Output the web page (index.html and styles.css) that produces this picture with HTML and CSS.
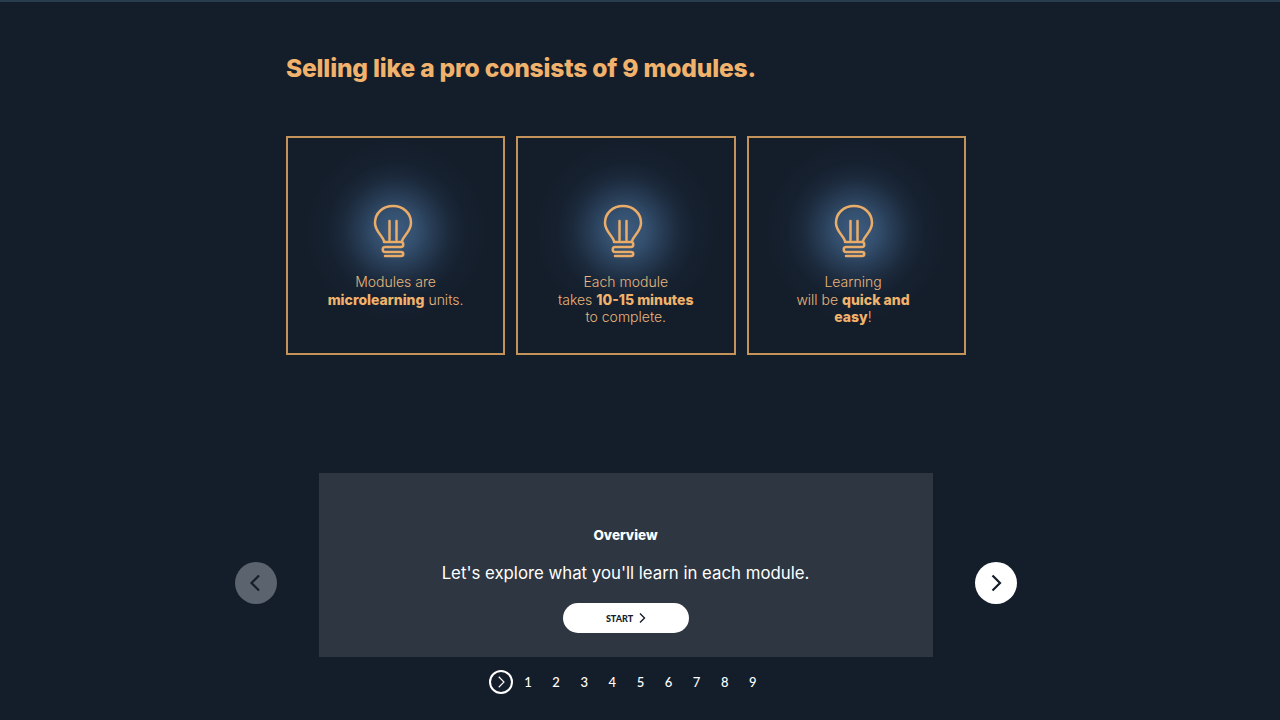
FILE: index.html
```html
<!DOCTYPE html>
<html lang="en">
<head>
  <meta charset="UTF-8">
  <meta name="viewport" content="width=device-width, initial-scale=1.0">
  <title>Selling like a pro</title>
  <link rel="stylesheet" href="styles.css">
</head>
<body>
  <div class="top-bar"></div>

  <div class="intro">
    <h1>Selling like a pro consists of 9 modules.</h1>
    <div class="cards">
      <div class="card">
        <div class="glow">
          <svg class="bulb" viewBox="0 0 40 54"><use href="#bulb"></use></svg>
        </div>
        <p>Modules are<br><b>microlearning</b> units.</p>
      </div>
      <div class="card">
        <div class="glow">
          <svg class="bulb" viewBox="0 0 40 54"><use href="#bulb"></use></svg>
        </div>
        <p>Each module<br>takes <b>10-15 minutes</b><br>to complete.</p>
      </div>
      <div class="card card-narrow">
        <div class="glow">
          <svg class="bulb" viewBox="0 0 40 54"><use href="#bulb"></use></svg>
        </div>
        <p>Learning<br>will be <b>quick and<br>easy</b>!</p>
      </div>
    </div>
  </div>

  <div class="carousel">
    <button class="arrow arrow-prev">
      <svg viewBox="0 0 24 24"><path d="M15 4.500 7.500 12l7.500 7.500"></path></svg>
    </button>
    <div class="slide-col">
      <div class="slide">
        <h2>Overview</h2>
        <p>Let's explore what you'll learn in each module.</p>
        <button class="start">START
          <svg viewBox="0 0 10 12"><path d="M3 1.500 7.500 6 3 10.500"></path></svg>
        </button>
      </div>
      <div class="pager">
        <span class="pager-current">
          <svg viewBox="0 0 24 24"><path d="M9 5l7 7-7 7"></path></svg>
        </span>
        <span>1</span><span>2</span><span>3</span><span>4</span><span>5</span><span>6</span><span>7</span><span>8</span><span>9</span>
      </div>
    </div>
    <button class="arrow arrow-next">
      <svg viewBox="0 0 24 24"><path d="M8.500 4.500 16 12l-7.500 7.500"></path></svg>
    </button>
  </div>

  <svg class="defs" width="0" height="0">
    <symbol id="bulb" viewBox="0 0 40 54">
      <path d="M11 37 C9 31 2 27 2 19 C2 9 10 2 20 2 C30 2 38 9 38 19 C38 27 31 31 29 37"></path>
      <path d="M16.500 17V36M23.500 17V36"></path>
      <path d="M11 38H28C31 38 31 43 28 43H12C9 43 9 48 12 48H28C31 48 31 52 28 52H12"></path>
    </symbol>
  </svg>
</body>
</html>
```

FILE: styles.css
```css
* {
  box-sizing: border-box;
}

html, body {
  height: 100%;
}

body {
  margin: 0;
  background-color: #141e2b;
  font-family: Inter, "Noto Sans", sans-serif;
  overflow: hidden;
}

.top-bar {
  height: 2px;
  background-color: #2a3d4e;
}

.defs {
  position: absolute;
}

.intro {
  width: 680px;
  margin-left: 286px;
}

h1 {
  margin: 0;
  padding-top: 50px;
  height: 134px;
  font-size: 24.600px;
  line-height: 32px;
  font-weight: 800;
  letter-spacing: -0.2px;
  color: #f0b26c;
}

.cards {
  display: grid;
  grid-template-columns: 219px 219.500px 219px;
  gap: 11px;
}

.card {
  height: 219px;
  border: 2px solid #c4935a;
  display: flex;
  flex-direction: column;
  align-items: center;
  padding-top: 3px;
  color: #e9b67b;
}

.glow {
  width: 180px;
  height: 180px;
  flex: none;
  margin-bottom: -48px;
  display: flex;
  align-items: center;
  justify-content: center;
  background: radial-gradient(circle closest-side, #3e5b80 0%, #34506f 22%, #263a52 42%, #1b293b 60%, #162130 76%, rgba(20, 30, 43, 0) 100%);
}

.bulb {
  width: 40px;
  height: 54px;
  margin-right: 5px;
  fill: none;
  stroke: #e9ad69;
  stroke-width: 2.500;
  stroke-linecap: round;
  stroke-linejoin: round;
}

.card p {
  position: relative;
  margin: 0;
  font-size: 14px;
  line-height: 17.500px;
  font-weight: 300;
  text-align: center;
}

.card-narrow p {
  margin-right: 6px;
}

.card b {
  font-weight: 800;
  color: #f0b26c;
}

.carousel {
  width: 782px;
  margin: 118px 0 0 235px;
  display: flex;
  justify-content: space-between;
  align-items: flex-start;
}

.arrow {
  width: 42px;
  height: 42px;
  margin-top: 89px;
  padding: 0;
  border: none;
  border-radius: 50%;
  background-color: #fff;
  display: flex;
  align-items: center;
  justify-content: center;
}

.arrow svg {
  width: 24px;
  height: 24px;
  fill: none;
  stroke: #141e2b;
  stroke-width: 2.200;
}

.arrow-prev {
  background-color: #5b636e;
}

.slide-col {
  width: 614px;
  margin-left: -1px;
}

.slide {
  height: 184px;
  background-color: #2e3641;
  padding-top: 52px;
  display: flex;
  flex-direction: column;
  align-items: center;
  color: #fff;
}

.slide h2 {
  margin: 0;
  font-size: 13.500px;
  line-height: 20px;
  font-weight: 800;
}

.slide p {
  margin: 16px 0 0;
  font-size: 16.800px;
  line-height: 24px;
}

.start {
  width: 126px;
  height: 30px;
  margin-top: 18px;
  padding: 0 0 0 2px;
  border: none;
  border-radius: 15px;
  background-color: #fff;
  color: #141e2b;
  font-family: Lato, sans-serif;
  font-size: 9px;
  font-weight: 900;
  display: flex;
  align-items: center;
  justify-content: center;
  gap: 4px;
}

.start svg {
  width: 10px;
  height: 12px;
  fill: none;
  stroke: #141e2b;
  stroke-width: 1.400;
}

.pager {
  display: flex;
  align-items: center;
  margin: 13px 0 0 170px;
  color: #fff;
  font-family: Lato, sans-serif;
  font-size: 13px;
  font-weight: 500;
}

.pager span {
  width: 28.100px;
  text-align: center;
}

.pager .pager-current {
  width: 24px;
  height: 24px;
  margin-right: 1.500px;
  border: 2px solid #fff;
  border-radius: 50%;
  display: flex;
  align-items: center;
  justify-content: center;
}

.pager-current svg {
  width: 18px;
  height: 18px;
  fill: none;
  stroke: #fff;
  stroke-width: 1.500;
}
```
